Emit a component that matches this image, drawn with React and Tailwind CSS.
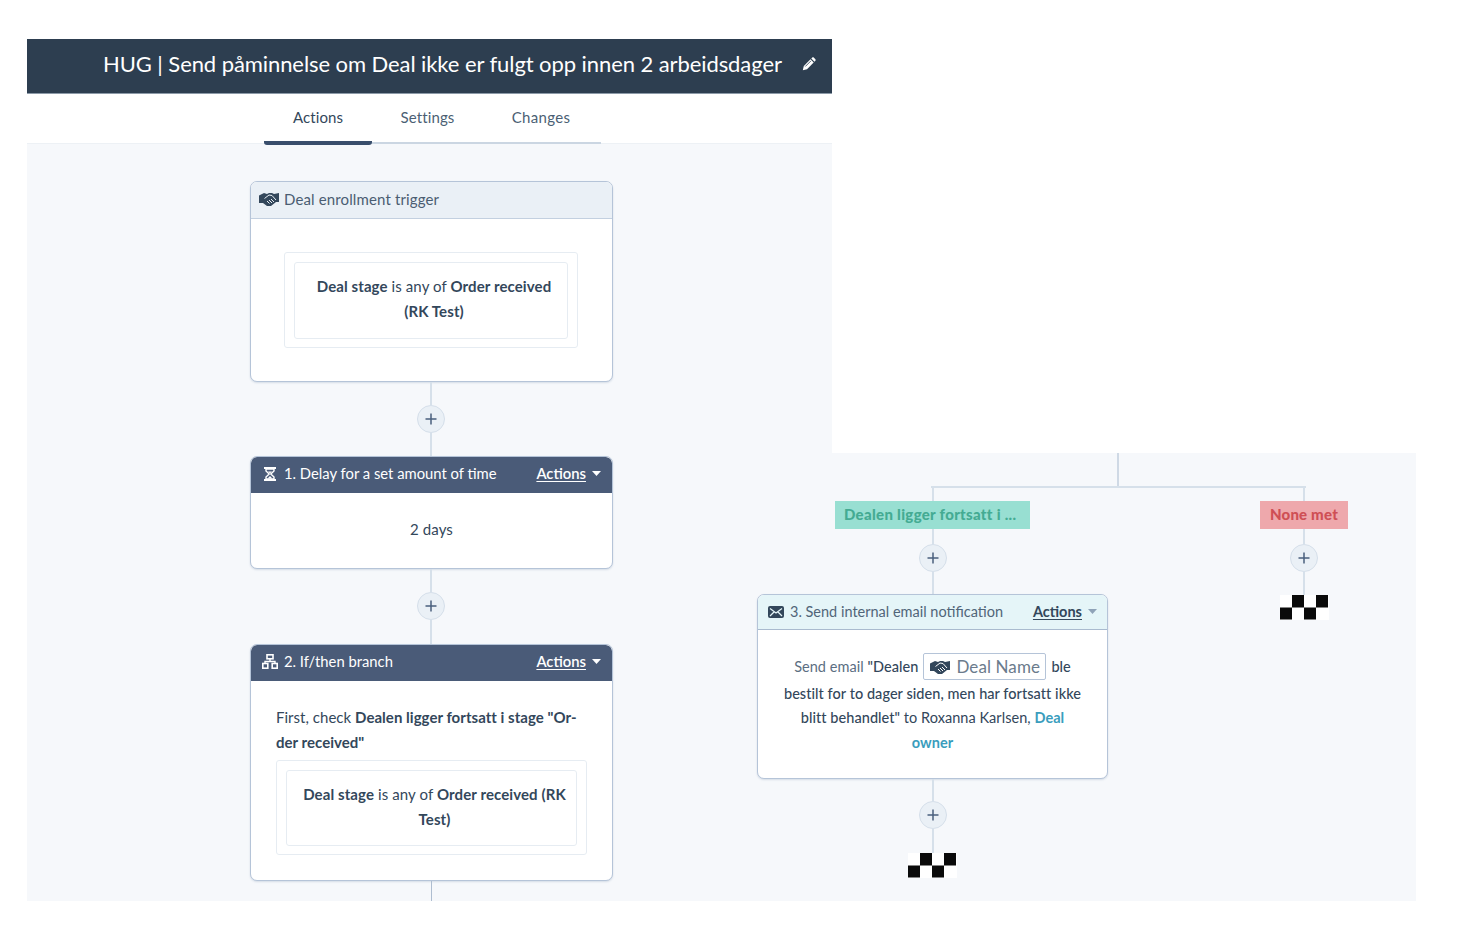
import React from "react";

const Plus = () => (
  <div className="w-[28px] h-[28px] shrink-0 rounded-full bg-[#eaf0f6] border border-[#d5dfea] flex items-center justify-center">
    <svg width="12" height="12" viewBox="0 0 12 12" className="block">
      <path d="M6 .5v11M.5 6h11" stroke="#4a5f7e" strokeWidth="1.5" />
    </svg>
  </div>
);

const Line = ({ h }) => <div className={`w-[2px] bg-[#d6e0ea] ${h}`} />;

const Caret = ({ color }) => (
  <svg width="9" height="5" viewBox="0 0 9 5" className="block">
    <path d="M0 0h9L4.5 5z" fill={color} />
  </svg>
);

const Flag = () => (
  <svg width="49" height="25" viewBox="0 0 49 25" className="block shrink-0">
    <rect width="49" height="25" fill="#fff" />
    <rect x="12" y="0" width="12" height="12.5" fill="#0a0a0a" />
    <rect x="36" y="0" width="12" height="12.5" fill="#0a0a0a" />
    <rect x="0" y="12.5" width="12" height="12" fill="#0a0a0a" />
    <rect x="24" y="12.5" width="12" height="12" fill="#0a0a0a" />
  </svg>
);

const Mail = () => (
  <svg width="16" height="12" viewBox="0 0 16 12" className="block shrink-0">
    <rect width="16" height="12" rx="2" fill="#33475b" />
    <path d="M2 2.5 8 7l6-4.5M2 10l4-4M14 10l-4-4" stroke="#e5f5f8" strokeWidth="1.2" fill="none" />
  </svg>
);

const Handshake = ({ bg }) => (
  <svg width="20" height="14" viewBox="0 0 20 14" className="block shrink-0">
    <path d="M0 3.5 5 1l3 1 2-1h3l2 1 5-1v9h-3l-5 4H8L4 11H0z" fill="#33475b" />
    <path d="M5.5 6.5 10 3l3 .5 4 4.5M8 9l2.5 2.5M10 8l3 3M12 7l3 3" stroke={bg} strokeWidth="1" fill="none" />
  </svg>
);

const Hourglass = () => (
  <svg width="14" height="14" viewBox="0 0 14 14" className="block">
    <path d="M1 1h12M1 13h12" stroke="#fff" strokeWidth="2" />
    <path d="M3 2v2l3.2 3L3 10v2h8v-2L7.8 7 11 4V2z" fill="none" stroke="#fff" strokeWidth="1.4" />
    <path d="M4.5 11.5 7 9l2.5 2.5zM5 4.5h4L7 6.5z" fill="#fff" />
  </svg>
);

const Branch = () => (
  <svg width="16" height="15" viewBox="0 0 16 15" className="block">
    <rect x="5" y=".8" width="6" height="4" fill="none" stroke="#fff" strokeWidth="1.6" />
    <path d="M8 5v3M3 9.5V7.5h10v2" fill="none" stroke="#fff" strokeWidth="1.4" />
    <rect x=".8" y="9.5" width="5" height="4.7" fill="none" stroke="#fff" strokeWidth="1.6" />
    <rect x="10.2" y="9.5" width="5" height="4.7" fill="none" stroke="#fff" strokeWidth="1.6" />
  </svg>
);

const Pencil = () => (
  <svg width="14" height="14" viewBox="0 0 14 14" className="block shrink-0">
    <path d="M.8 13.2 1.8 9 8.5 2.3l3.2 3.2L5 12.2z" fill="#fff" />
    <path d="M9.3 1.5 10.3.6c.4-.4 1-.4 1.4 0l1.7 1.7c.4.4.4 1 0 1.4l-.9 1z" fill="#fff" />
    <path d="M3.3 9.5 9 3.8" stroke="#2d3e50" strokeWidth=".8" />
  </svg>
);

const DarkHeader = ({ icon, title }) => (
  <div className="h-[36px] bg-[#4a5b78] rounded-t-[6px] flex items-center pb-[3px] pl-[10px] pr-[11px] text-white text-[14.8px]">
    <span className="w-[17px] flex justify-center shrink-0">{icon}</span>
    <span className="ml-[6px] whitespace-nowrap">{title}</span>
    <span className="ml-auto underline underline-offset-2 font-semibold">Actions</span>
    <span className="ml-[6px]"><Caret color="#fff" /></span>
  </div>
);

const Card = ({ className, children }) => (
  <div className={`bg-white rounded-[7px] border border-[#b5c4d8] shadow-[0_1px_2px_rgba(80,110,150,0.2)] overflow-hidden ${className}`}>
    {children}
  </div>
);

const Condition = ({ outer, inner, children }) => (
  <div className={`border border-[#e6ecf2] rounded-[3px] p-[9px] ${outer}`}>
    <div className={`border border-[#e6ecf2] rounded-[3px] flex justify-center text-center leading-[25px] text-[15px] tracking-[0.1px] ${inner}`}>
      <div className="whitespace-nowrap">{children}</div>
    </div>
  </div>
);

export default function App() {
  return (
    <div className="w-[1459px] h-[926px] bg-white pt-[39px] pl-[27px] flex items-start overflow-hidden text-[#33475b] font-['Lato','Open_Sans',sans-serif]">
      {/* left capture */}
      <div className="w-[805px] h-[862px] shrink-0 flex flex-col bg-[#f6f8fb]">
        <div className="h-[55px] shrink-0 bg-[#2d3e50] border-b border-[#8c9aa8] flex items-center pl-[76px] text-white">
          <span className="text-[22px] tracking-[-0.08px] whitespace-nowrap pb-[5px]">HUG | Send påminnelse om Deal ikke er fulgt opp innen 2 arbeidsdager</span>
          <span className="ml-[20px] pb-[5px]"><Pencil /></span>
        </div>
        <div className="h-[50px] shrink-0 bg-white border-b border-[#edf1f5] pl-[237px]">
          <div className="w-[337px] h-[50px] flex border-b-2 border-[#cbd6e2] text-[15px] tracking-[0.1px]">
            <div className="w-[108px] h-[51px] flex items-center justify-center border-b-[4px] border-[#394e6c] rounded-b-[3px] pb-[1px] text-[#33475b]">Actions</div>
            <div className="w-[111px] flex items-center justify-center pt-[1px] pb-[3px] text-[#4b5f74]">Settings</div>
            <div className="w-[116px] flex items-center justify-center pt-[1px] pb-[3px] text-[#4b5f74] tracking-[0.3px]">Changes</div>
          </div>
        </div>
        <div className="flex-1 min-h-0 pl-[223px] pt-[37px] flex flex-col items-start">
          <div className="w-[362px] flex flex-col items-center">
            <Card className="w-[363px] self-start h-[201px]">
              <div className="h-[37px] bg-[#eaf0f6] border-b border-[#c3d0e0] flex items-center pl-[8px] pb-[2px] text-[15px] tracking-[0.13px] text-[#4a5d72]">
                <Handshake bg="#eaf0f6" />
                <span className="ml-[5px] whitespace-nowrap">Deal enrollment trigger</span>
              </div>
              <div className="pt-[33px] pl-[33px]">
                <Condition outer="w-[294px] h-[96px]" inner="h-[77px] pt-[11px] pl-[6px]">
                  <b className="font-bold">Deal stage</b> is any of <b className="font-bold">Order received</b>
                  <br />
                  <b className="font-bold">(RK Test)</b>
                </Condition>
              </div>
            </Card>
            <Line h="h-[23px]" />
            <Plus />
            <Line h="h-[23px]" />
            <Card className="w-[363px] self-start h-[113px]">
              <DarkHeader icon={<Hourglass />} title="1. Delay for a set amount of time" />
              <div className="h-[75px] flex items-center justify-center pb-[3px] text-[15px] tracking-[0.1px]">2 days</div>
            </Card>
            <Line h="h-[23px]" />
            <Plus />
            <Line h="h-[24px]" />
            <Card className="w-[363px] self-start h-[237px]">
              <DarkHeader icon={<Branch />} title="2. If/then branch" />
              <div className="pl-[25px] pt-[24px] leading-[25px] text-[15px] tracking-[0.03px] whitespace-nowrap">
                First, check <b className="font-bold">Dealen ligger fortsatt i stage "Or-</b>
                <br />
                <b className="font-bold">der received"</b>
              </div>
              <div className="pl-[25px] pt-[5px]">
                <Condition outer="w-[311px] h-[95px]" inner="h-[76px] pt-[11px] pl-[6px]">
                  <b className="font-bold">Deal stage</b> is any of <b className="font-bold">Order received (RK</b>
                  <br />
                  <b className="font-bold">Test)</b>
                </Condition>
              </div>
            </Card>
            <div className="w-[1px] h-[20px] bg-[#aebdd0]" />
          </div>
        </div>
      </div>

      {/* right capture */}
      <div className="w-[687px] h-[448px] shrink-0 mt-[414px] -ml-[103px] bg-[#f6f8fb] flex flex-col">
        <div className="ml-[388px] w-[2px] h-[33px] bg-[#cfd9e5]" />
        <div className="ml-[202px] w-[375px] h-[2px] bg-[#d6e0ea]" />
        <div className="flex items-start ml-[28px]">
          <div className="w-[351px] flex flex-col items-center">
            <Line h="h-[13px]" />
            <div className="w-[195px] h-[28px] bg-[#98dfd2] flex items-center pl-[9px] pb-[2px] text-[15px] tracking-[0.3px] font-black text-[#44ab93] whitespace-nowrap">
              Dealen ligger fortsatt i ...
            </div>
            <Line h="h-[15px]" />
            <Plus />
            <Line h="h-[22px]" />
            <Card className="w-[351px] h-[185px]">
              <div className="h-[35px] bg-[#e5f5f8] border-b border-[#a9bbcf] flex items-center pl-[10px] pr-[10px] pb-[1px] text-[14.5px] text-[#516579]">
                <Mail />
                <span className="ml-[6px] whitespace-nowrap">3. Send internal email notification</span>
                <span className="ml-auto underline underline-offset-2 font-bold text-[#33475b]">Actions</span>
                <span className="ml-[6px]"><Caret color="#8fa3b8" /></span>
              </div>
              <div className="pt-[24px] text-center leading-[25px] text-[14.5px] tracking-[0.05px] whitespace-nowrap font-medium">
                <div className="h-[27px] flex items-start justify-center">
                  <span className="font-normal text-[#5b6e82]">Send email&nbsp;</span>
                  <span>"Dealen</span>
                  <span className="ml-[5px] -mt-[1px] w-[123px] h-[27px] border border-[#b5c4d8] rounded-[2px] flex items-center pl-[6px] text-[17px] tracking-[0.1px] font-normal text-[#6b7b8c]">
                    <Handshake bg="#ffffff" />
                    <span className="ml-[6px]">Deal Name</span>
                  </span>
                  <span className="ml-[5px]">ble</span>
                </div>
                <div>bestilt for to dager siden, men har fortsatt ikke</div>
                <div className="-mt-[1px]">
                  blitt behandlet" <span className="font-normal">to Roxanna Karlsen,</span> <span className="font-bold text-[#3a9dbd]">Deal</span>
                </div>
                <div className="font-bold text-[#3a9dbd]">owner</div>
              </div>
            </Card>
            <Line h="h-[22px]" />
            <Plus />
            <Line h="h-[24px]" />
            <Flag />
          </div>
          <div className="ml-[152px] w-[88px] flex flex-col items-center">
            <Line h="h-[13px]" />
            <div className="w-[88px] h-[28px] bg-[#eea8ac] flex items-center justify-center pb-[2px] text-[15px] tracking-[0.2px] font-black text-[#cf4f55] whitespace-nowrap">
              None met
            </div>
            <Line h="h-[15px]" />
            <Plus />
            <Line h="h-[23px]" />
            <Flag />
          </div>
        </div>
      </div>
    </div>
  );
}
